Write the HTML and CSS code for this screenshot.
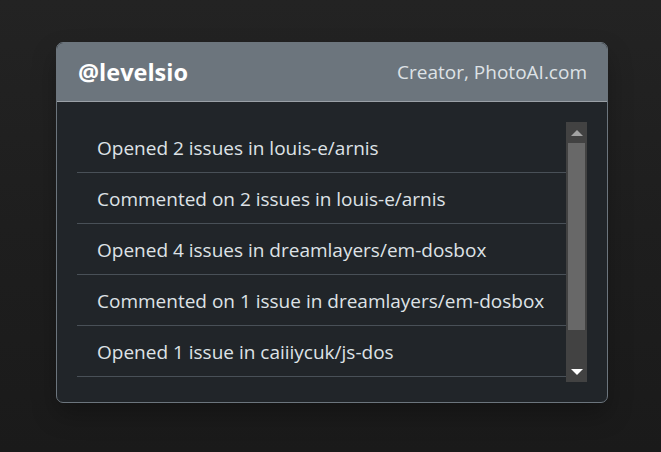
FILE: index.html
```html
<!DOCTYPE html>
<html lang="en">
<head>
<meta charset="utf-8">
<title>@levelsio</title>
<link rel="stylesheet" href="styles.css">
</head>
<body>
<main class="page">
  <section class="card">
    <header class="card-header">
      <h5 class="handle">@levelsio</h5>
      <span class="role">Creator, PhotoAI.com</span>
    </header>
    <div class="card-body">
      <div class="scroll-box">
        <ul class="list">
          <li class="item">Opened 2 issues in louis-e/arnis</li>
          <li class="item">Commented on 2 issues in louis-e/arnis</li>
          <li class="item">Opened 4 issues in dreamlayers/em-dosbox</li>
          <li class="item">Commented on 1 issue in dreamlayers/em-dosbox</li>
          <li class="item">Opened 1 issue in caiiiycuk/js-dos</li>
        </ul>
        <div class="scrollbar" aria-hidden="true">
          <div class="sb-btn"><span class="arrow-up"></span></div>
          <div class="sb-track"><div class="sb-thumb"></div></div>
          <div class="sb-btn"><span class="arrow-down"></span></div>
        </div>
      </div>
    </div>
  </section>
</main>
</body>
</html>
```
FILE: styles.css
```css
* { box-sizing: border-box; }
html, body { margin: 0; height: 100%; }
body {
  background: linear-gradient(180deg, #232323 0%, #1e1e1e 50%, #1a1a1a 100%);
  font-family: "Open Sans", "Noto Sans", Lato, sans-serif;
  color: #dee2e6;
}
.page {
  padding: 42px 0 0 56px;
}
.card {
  width: 552px;
  border: 1px solid #6c757d;
  border-radius: 7px;
  background: #212529;
  overflow: hidden;
  box-shadow: 0 12px 24px rgba(0,0,0,0.25);
}
.card-header {
  background: #6c757d;
  height: 59px;
  padding: 0 20px 0 21px;
  display: flex;
  align-items: center;
  justify-content: space-between;
  border-bottom: 1px solid #9aa0a6;
}
.handle {
  margin: 0;
  font-size: 23.5px;
  font-weight: 700;
  color: #ffffff;
}
.role {
  font-size: 19px;
  color: #dee2e6;
}
.card-body {
  padding: 20px;
}
.scroll-box {
  display: flex;
  height: 260px;
}
.list {
  list-style: none;
  margin: 0;
  padding: 0;
  flex: 1;
  overflow: hidden;
}
.item {
  height: 51px;
  padding: 2px 20px 0;
  display: flex;
  align-items: center;
  border-bottom: 1px solid #495057;
  font-size: 19px;
  color: #dee2e6;
  white-space: nowrap;
}
.scrollbar {
  width: 21px;
  background: #424242;
  display: flex;
  flex-direction: column;
}
.sb-btn {
  height: 21px;
  display: flex;
  align-items: center;
  justify-content: center;
}
.sb-track {
  flex: 1;
  padding: 0 2px;
}
.sb-thumb {
  height: 187px;
  background: #686868;
}
.arrow-up, .arrow-down {
  width: 0; height: 0;
  border-left: 6px solid transparent;
  border-right: 6px solid transparent;
}
.arrow-up { border-bottom: 6px solid #a3a3a3; }
.arrow-down { border-top: 6px solid #ffffff; }
```
